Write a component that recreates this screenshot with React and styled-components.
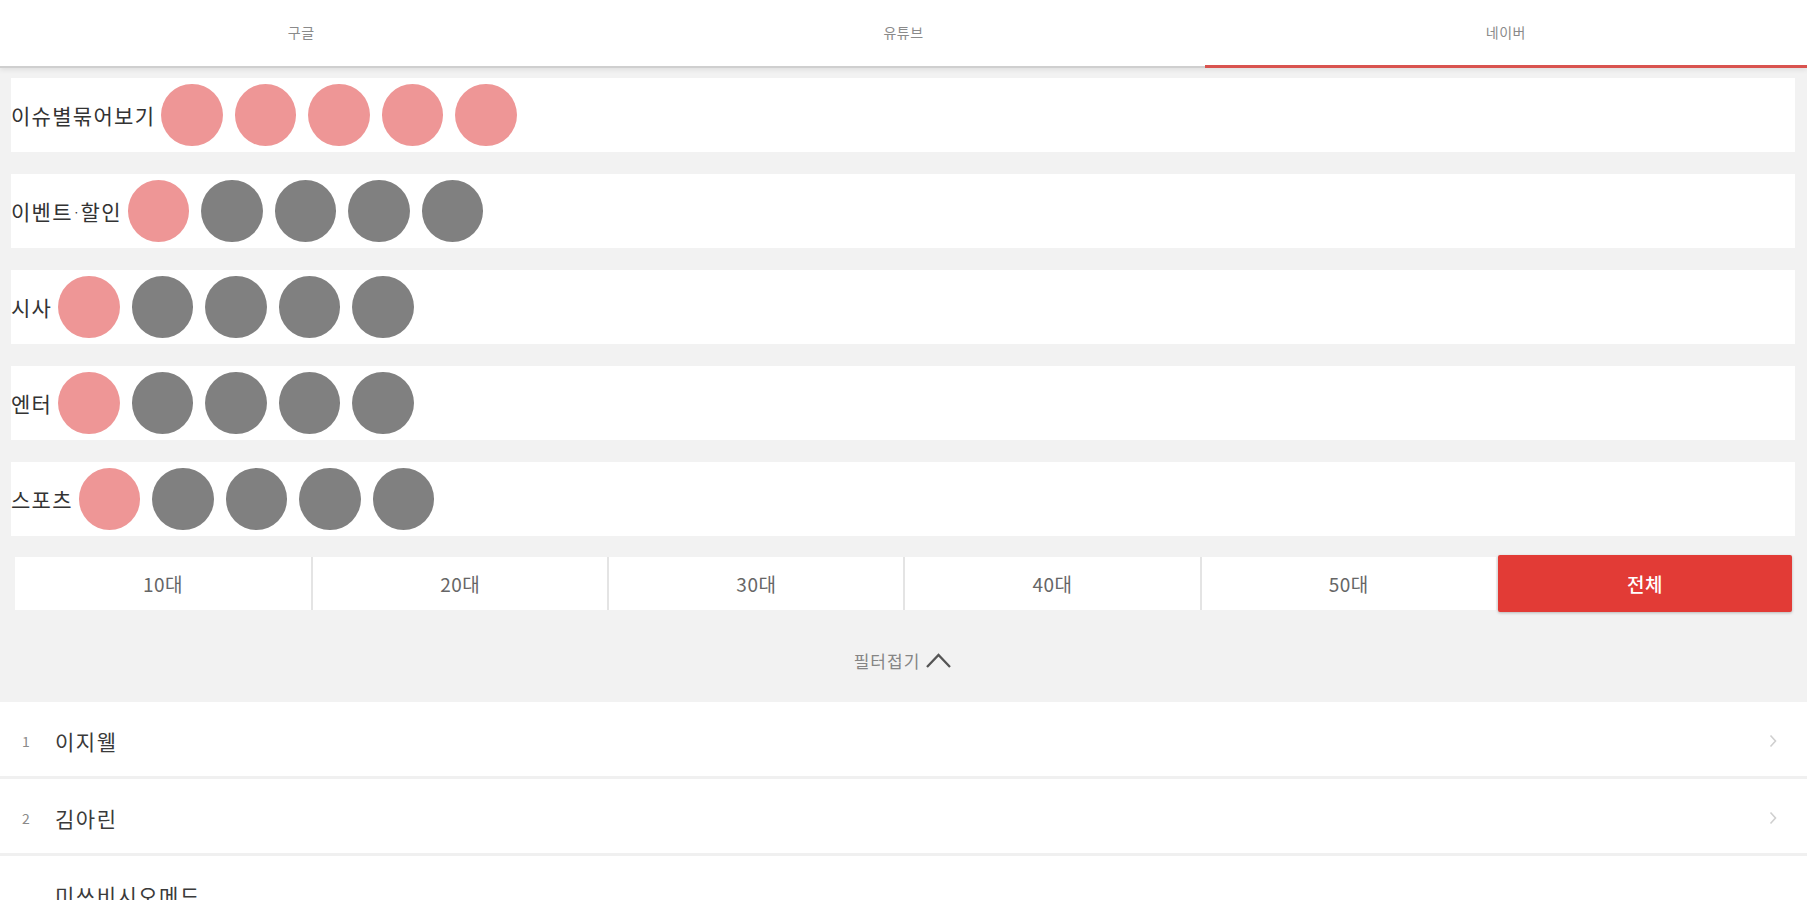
import React from "react";
import styled, { createGlobalStyle } from "styled-components";

const Global = createGlobalStyle`
  html, body { margin: 0; padding: 0; background: #ffffff; }
  body { font-family: "Noto Sans CJK KR", "Noto Sans", sans-serif; overflow: hidden; }
  * { box-sizing: border-box; }
`;

const Page = styled.div`
  width: 1807px;
  height: 900px;
  overflow: hidden;
  background: #fff;
`;

const TabBar = styled.div`
  display: flex;
  height: 68px;
  background: #fff;
  border-bottom: 2px solid #cfcfcf;
  box-shadow: 0 2px 5px rgba(0, 0, 0, 0.08);
  position: relative;
  z-index: 1;
`;

const Tab = styled.div`
  flex: 1;
  display: flex;
  align-items: center;
  justify-content: center;
  padding-bottom: 2px;
  font-size: 14px;
  letter-spacing: 0.5px;
  color: #8a8a8a;
  border-bottom: 3px solid ${(p) => (p.$active ? "#d9534f" : "transparent")};
  margin-bottom: -2px;
`;

const FilterArea = styled.div`
  background: #f2f2f2;
  padding: 10px 12px 0 11px;
`;

const IssueList = styled.div`
  display: flex;
  flex-direction: column;
  gap: 22px;
`;

const IssueRow = styled.div`
  display: flex;
  align-items: center;
  height: 74px;
  background: #fff;
`;

const IssueLabel = styled.span`
  font-size: 21px;
  font-weight: 400;
  color: #333;
  letter-spacing: 1.3px;
  white-space: nowrap;
`;

const Sep = styled.span`
  font-size: 12px;
  letter-spacing: 0;
  padding-right: 1px;
  vertical-align: 3px;
`;

const Dot = styled.span`
  width: 61.5px;
  height: 62px;
  border-radius: 50%;
  margin: 0 6px;
  flex: none;
  background: ${(p) => (p.$on ? "#ee9696" : "#808080")};
`;

const AgeGroup = styled.div`
  display: grid;
  grid-template-columns: repeat(6, 1fr);
  margin: 21px 3px 0 4px;
  height: 53px;
`;

const AgeButton = styled.div`
  display: flex;
  align-items: center;
  justify-content: center;
  font-size: 19px;
  letter-spacing: 0.5px;
  color: ${(p) => (p.$active ? "#fff" : "#666")};
  background: ${(p) => (p.$active ? "#e23b36" : "#fff")};
  border-left: ${(p) => (p.$first || p.$active ? "none" : "2px solid #e4e4e4")};
  border-radius: ${(p) => (p.$active ? "2px" : "0")};
  margin: ${(p) => (p.$active ? "-2px 0 -2px 2px" : "0")};
  box-shadow: ${(p) => (p.$active ? "0 1px 3px rgba(0,0,0,0.25)" : "none")};
  font-weight: ${(p) => (p.$active ? 500 : 400)};
`;

const Collapse = styled.div`
  display: flex;
  align-items: center;
  justify-content: center;
  gap: 5px;
  height: 92px;
  padding-top: 8px;
  font-size: 17px;
  letter-spacing: 1px;
  color: #858585;
`;

const RankList = styled.div`
  background: #fff;
`;

const RankRow = styled.div`
  display: flex;
  align-items: center;
  height: 77px;
  padding: 4px 30px 0 20px;
  border-bottom: 3px solid #f0f0f0;
`;

const RankNum = styled.span`
  width: 35px;
  font-size: 14px;
  color: #8a8a8a;
  padding-left: 2px;
`;

const RankName = styled.span`
  flex: 1;
  font-size: 21px;
  letter-spacing: 1.5px;
  color: #3a3a3a;
`;

const Chevron = () => (
  <svg width="8" height="14" viewBox="0 0 8 14">
    <path d="M1.5 1.5 L6.5 7 L1.5 12.5" fill="none" stroke="#cfcfcf" strokeWidth="1.6" />
  </svg>
);

const ChevronUp = () => (
  <svg width="27" height="17" viewBox="0 0 27 17">
    <path d="M2 15 L13.5 3 L25 15" fill="none" stroke="#555" strokeWidth="2.3" />
  </svg>
);

const issues = [
  { label: ["이슈별묶어보기"], on: 5 },
  { label: ["이벤트", "할인"], on: 1 },
  { label: ["시사"], on: 1 },
  { label: ["엔터"], on: 1 },
  { label: ["스포츠"], on: 1 },
];

const ages = ["10대", "20대", "30대", "40대", "50대", "전체"];

const ranks = [
  { n: "1", name: "이지웰" },
  { n: "2", name: "김아린" },
  { n: "", name: "미쓰비시오메드" },
];

export default function App() {
  return (
    <Page>
      <Global />
      <TabBar>
        <Tab>구글</Tab>
        <Tab>유튜브</Tab>
        <Tab $active>네이버</Tab>
      </TabBar>
      <FilterArea>
        <IssueList>
          {issues.map((it) => (
            <IssueRow key={it.label.join("")}>
              <IssueLabel>
                {it.label[0]}
                {it.label[1] && (
                  <>
                    <Sep>·</Sep>
                    {it.label[1]}
                  </>
                )}
              </IssueLabel>
              {[0, 1, 2, 3, 4].map((i) => (
                <Dot key={i} $on={i < it.on} />
              ))}
            </IssueRow>
          ))}
        </IssueList>
        <AgeGroup>
          {ages.map((a, i) => (
            <AgeButton key={a} $first={i === 0} $active={a === "전체"}>
              {a}
            </AgeButton>
          ))}
        </AgeGroup>
        <Collapse>
          필터접기
          <ChevronUp />
        </Collapse>
      </FilterArea>
      <RankList>
        {ranks.map((r) => (
          <RankRow key={r.name}>
            <RankNum>{r.n}</RankNum>
            <RankName>{r.name}</RankName>
            {r.n && <Chevron />}
          </RankRow>
        ))}
      </RankList>
    </Page>
  );
}
